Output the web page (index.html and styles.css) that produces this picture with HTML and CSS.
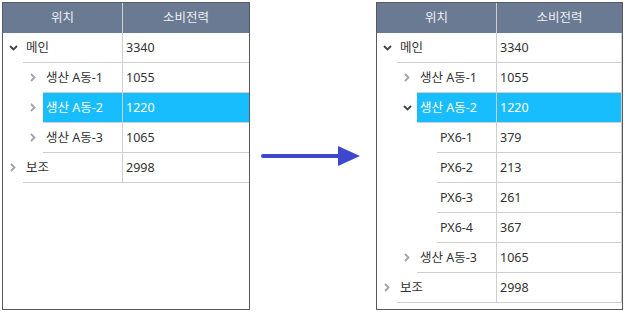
FILE: index.html
```html
<!DOCTYPE html>
<html lang="ko">
<head>
<meta charset="utf-8">
<link rel="stylesheet" href="styles.css">
</head>
<body>
<div class="page">
  <div class="grid grid-left">
    <div class="head">
      <div class="hcell hname">위치</div>
      <div class="hcell hval">소비전력</div>
    </div>
    <div class="row lvl0">
      <div class="indent"><span class="tog open"><svg width="9" height="6" viewBox="0 0 9 6"><polyline points="1,1 4.5,4.5 8,1" /></svg></span></div>
      <div class="body"><div class="name">메인</div><div class="val">3340</div></div>
    </div>
    <div class="row lvl1">
      <div class="indent"><span class="tog"><svg width="6" height="9" viewBox="0 0 6 9"><polyline points="1,1 4.5,4.5 1,8" /></svg></span></div>
      <div class="body"><div class="name">생산 A동-1</div><div class="val">1055</div></div>
    </div>
    <div class="row lvl1 selected">
      <div class="indent"><span class="tog"><svg width="6" height="9" viewBox="0 0 6 9"><polyline points="1,1 4.5,4.5 1,8" /></svg></span></div>
      <div class="body"><div class="name">생산 A동-2</div><div class="val">1220</div></div>
    </div>
    <div class="row lvl1">
      <div class="indent"><span class="tog"><svg width="6" height="9" viewBox="0 0 6 9"><polyline points="1,1 4.5,4.5 1,8" /></svg></span></div>
      <div class="body"><div class="name">생산 A동-3</div><div class="val">1065</div></div>
    </div>
    <div class="row lvl0">
      <div class="indent"><span class="tog"><svg width="6" height="9" viewBox="0 0 6 9"><polyline points="1,1 4.5,4.5 1,8" /></svg></span></div>
      <div class="body"><div class="name">보조</div><div class="val">2998</div></div>
    </div>
  </div>

  <div class="arrow">
    <svg width="100" height="22" viewBox="0 0 100 22">
      <line x1="2" y1="11" x2="80" y2="11" stroke="#3d48cf" stroke-width="4" stroke-linecap="round"/>
      <polygon points="77,1 99,11 77,21" fill="#3d48cf"/>
    </svg>
  </div>

  <div class="grid grid-right">
    <div class="head">
      <div class="hcell hname">위치</div>
      <div class="hcell hval">소비전력</div>
    </div>
    <div class="row lvl0">
      <div class="indent"><span class="tog open"><svg width="9" height="6" viewBox="0 0 9 6"><polyline points="1,1 4.5,4.5 8,1" /></svg></span></div>
      <div class="body"><div class="name">메인</div><div class="val">3340</div></div>
    </div>
    <div class="row lvl1">
      <div class="indent"><span class="tog"><svg width="6" height="9" viewBox="0 0 6 9"><polyline points="1,1 4.5,4.5 1,8" /></svg></span></div>
      <div class="body"><div class="name">생산 A동-1</div><div class="val">1055</div></div>
    </div>
    <div class="row lvl1 selected">
      <div class="indent"><span class="tog open"><svg width="9" height="6" viewBox="0 0 9 6"><polyline points="1,1 4.5,4.5 8,1" /></svg></span></div>
      <div class="body"><div class="name">생산 A동-2</div><div class="val">1220</div></div>
    </div>
    <div class="row lvl2">
      <div class="indent"></div>
      <div class="body"><div class="name">PX6-1</div><div class="val">379</div></div>
    </div>
    <div class="row lvl2">
      <div class="indent"></div>
      <div class="body"><div class="name">PX6-2</div><div class="val">213</div></div>
    </div>
    <div class="row lvl2">
      <div class="indent"></div>
      <div class="body"><div class="name">PX6-3</div><div class="val">261</div></div>
    </div>
    <div class="row lvl2">
      <div class="indent"></div>
      <div class="body"><div class="name">PX6-4</div><div class="val">367</div></div>
    </div>
    <div class="row lvl1">
      <div class="indent"><span class="tog"><svg width="6" height="9" viewBox="0 0 6 9"><polyline points="1,1 4.5,4.5 1,8" /></svg></span></div>
      <div class="body"><div class="name">생산 A동-3</div><div class="val">1065</div></div>
    </div>
    <div class="row lvl0">
      <div class="indent"><span class="tog"><svg width="6" height="9" viewBox="0 0 6 9"><polyline points="1,1 4.5,4.5 1,8" /></svg></span></div>
      <div class="body"><div class="name">보조</div><div class="val">2998</div></div>
    </div>
  </div>
</div>
</body>
</html>
```
FILE: styles.css
```css
html, body {
  margin: 0;
  padding: 0;
  background: #ffffff;
}

.page {
  display: flex;
  align-items: center;
  padding: 2px 0 0 2px;
  font-family: "Noto Sans", "Noto Sans CJK KR", sans-serif;
  font-size: 12.5px;
  color: #333333;
}

.grid {
  box-sizing: border-box;
  height: 308px;
  border: 1px solid #58585f;
  background: #ffffff;
  display: flex;
  flex-direction: column;
}

.grid-left {
  width: 248px;
}

.grid-right {
  width: 247px;
}

.head {
  display: flex;
  height: 30px;
  background: #6b7a93;
  color: #eef1f5;
}

.hcell {
  display: flex;
  align-items: center;
  justify-content: center;
  line-height: 30px;
}

.hname {
  width: 119px;
}

.hval {
  flex: 1;
  border-left: 1px solid #cfcfcf;
}

.row {
  display: flex;
  height: 30px;
}

.indent {
  display: flex;
  justify-content: flex-end;
  flex: none;
}

.lvl0 .indent { width: 20px; }
.lvl1 .indent { width: 40px; }
.lvl2 .indent { width: 60px; }

.tog {
  width: 20px;
  height: 29px;
  display: flex;
  align-items: center;
  justify-content: center;
}

.tog svg {
  display: block;
  fill: none;
  stroke: #a3a3a3;
  stroke-width: 1.8;
}

.tog.open svg {
  stroke: #444444;
}

.body {
  flex: 1;
  display: flex;
  border-bottom: 1px solid #cfcfcf;
}

.name {
  flex: 1;
  padding-left: 3px;
  line-height: 29px;
  white-space: nowrap;
}

.val {
  flex: none;
  width: 123px;
  padding-left: 3px;
  border-left: 1px solid #cfcfcf;
  line-height: 29px;
}

.grid-right .val {
  width: 121px;
  border-right: 1px solid #cfcfcf;
}

.selected .body {
  background: #17bdfd;
  color: #ffffff;
}

.arrow {
  width: 126px;
  display: flex;
  padding-left: 11px;
  box-sizing: border-box;
}

.arrow svg {
  display: block;
}
```
